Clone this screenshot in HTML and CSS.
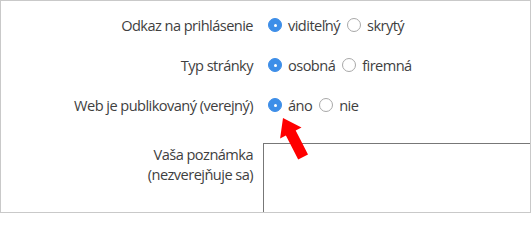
FILE: index.html
```html
<!DOCTYPE html>
<html lang="sk">
<head>
<meta charset="utf-8">
<link rel="stylesheet" href="styles.css">
</head>
<body>
<div class="frame">
  <form class="form">
    <div class="row">
      <div class="label">Odkaz na prihlásenie</div>
      <div class="options">
        <span class="opt"><span class="radio checked"></span>viditeľný</span>
        <span class="opt"><span class="radio"></span>skrytý</span>
      </div>
    </div>
    <div class="row">
      <div class="label">Typ stránky</div>
      <div class="options">
        <span class="opt"><span class="radio checked"></span>osobná</span>
        <span class="opt"><span class="radio"></span>firemná</span>
      </div>
    </div>
    <div class="row">
      <div class="label">Web je publikovaný (verejný)</div>
      <div class="options">
        <span class="opt"><span class="radio checked"></span>áno</span>
        <span class="opt"><span class="radio"></span>nie</span>
      </div>
    </div>
    <div class="row note">
      <div class="label">Vaša poznámka<br>(nezverejňuje sa)</div>
      <div class="area"></div>
    </div>
  </form>
  <svg class="arrow" width="531" height="213" viewBox="0 0 531 213">
    <polygon fill="#f00" points="283,118 301.5,127.6 295.7,130.6 308,154.6 298.2,159.6 285.9,135.6 280.1,138.6"/>
  </svg>
</div>
</body>
</html>
```
FILE: styles.css
```css
html, body {
  margin: 0;
  padding: 0;
  background: #fff;
}
.frame {
  position: relative;
  width: 531px;
  height: 213px;
  box-sizing: border-box;
  border: 1px solid #c9c9c9;
  overflow: hidden;
  font-family: "Open Sans", "Noto Sans", sans-serif;
  font-size: 14.6px;
  letter-spacing: -0.55px;
  color: #3f3f3f;
}
.form {
  display: flex;
  flex-direction: column;
  gap: 20px;
  padding-top: 14px;
}
.row {
  display: grid;
  grid-template-columns: 252px 1fr;
  column-gap: 15px;
  line-height: 20px;
}
.label {
  text-align: right;
}
.options {
  display: flex;
  gap: 7px;
}
.opt {
  display: flex;
  align-items: center;
  gap: 6px;
}
.radio {
  width: 14px;
  height: 14px;
  box-sizing: border-box;
  border-radius: 50%;
  border: 1px solid #a8a8a8;
  background: #fff;
  position: relative;
}
.radio.checked {
  background: #3d8ee8;
  border-color: #3d8ee8;
}
.radio.checked::after {
  content: "";
  position: absolute;
  left: 4.5px;
  top: 4.5px;
  width: 3px;
  height: 3px;
  border-radius: 50%;
  background: #fff;
}
.note {
  margin-top: 9px;
  column-gap: 10px;
}
.area {
  height: 100px;
  border: 1px solid #777;
  border-right: none;
  margin-top: -1px;
}
.arrow {
  position: absolute;
  left: -1px;
  top: -1px;
  pointer-events: none;
}
```
